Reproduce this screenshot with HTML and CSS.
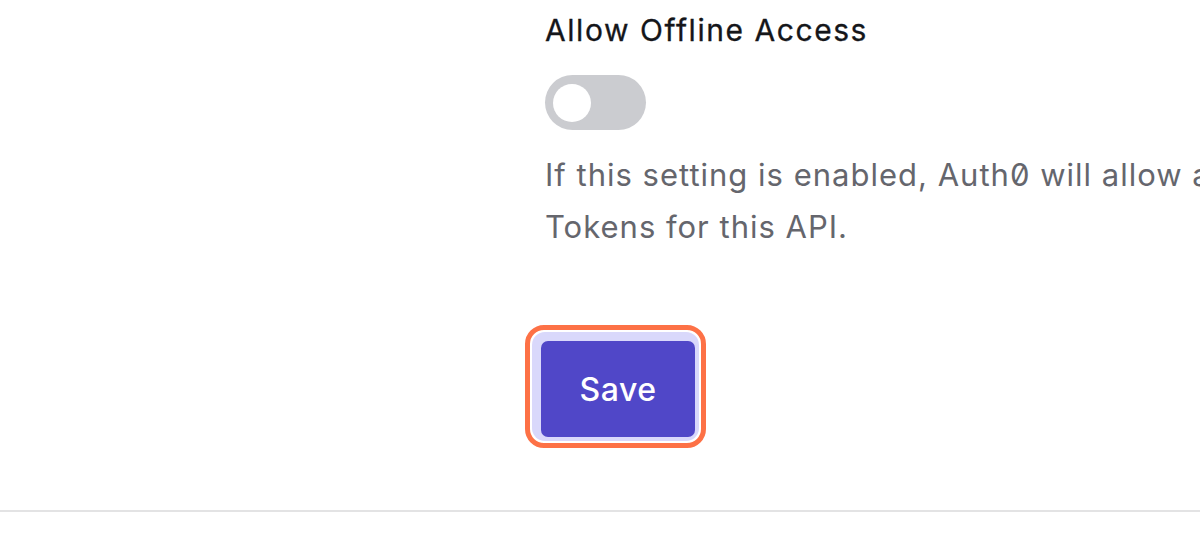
FILE: index.html
```html
<!DOCTYPE html>
<html lang="en">
<head>
<meta charset="utf-8">
<title>API Settings</title>
<link rel="stylesheet" href="styles.css">
</head>
<body>
<main class="page">
  <section class="content">
    <div class="field">
      <h3 class="field-label">Allow Offline Access</h3>
      <div class="toggle" role="switch" aria-checked="false"><span class="knob"></span></div>
      <p class="field-help">If this setting is enabled, Auth<span class="zero">0</span> will allow applications to ask for Refresh<br>Tokens for this API.</p>
    </div>
    <div class="actions">
      <div class="highlight">
        <div class="focus-ring">
          <button class="btn-primary" type="button">Save</button>
        </div>
      </div>
    </div>
  </section>
  <hr class="divider">
</main>
</body>
</html>
```

FILE: styles.css
```css
html, body {
  margin: 0;
  padding: 0;
  background: #ffffff;
}
body {
  width: 1200px;
  height: 548px;
  overflow: hidden;
  font-family: Inter, "Noto Sans", "Liberation Sans", sans-serif;
}
.page {
  display: flex;
  flex-direction: column;
  width: 1200px;
  overflow: hidden;
}
.content {
  margin-left: 545px;
  width: 655px;
  padding-top: 10px;
}
.field {
  display: flex;
  flex-direction: column;
  align-items: flex-start;
}
.field-label {
  margin: 0;
  font-size: 30px;
  line-height: 40px;
  font-weight: 400;
  color: #15161a;
  letter-spacing: 1.55px;
  -webkit-text-stroke: 0.3px #15161a;
}
.toggle {
  margin-top: 25px;
  width: 101px;
  height: 55px;
  border-radius: 28px;
  background: #cbccd0;
  display: flex;
  align-items: center;
  padding-left: 8px;
  box-sizing: border-box;
}
.knob {
  width: 38px;
  height: 38px;
  border-radius: 50%;
  background: #ffffff;
}
.field-help {
  margin: 19px 0 0;
  font-size: 31px;
  line-height: 52px;
  color: #65666d;
  font-weight: 400;
  letter-spacing: 1px;
  white-space: nowrap;
}
.zero {
  font-feature-settings: "zero" 1;
}
.actions {
  margin-top: 72px;
  margin-left: -20px;
  display: flex;
}
.highlight {
  border: 5px solid #fd7146;
  border-radius: 19px;
  padding: 2px;
  background: #ffffff;
}
.focus-ring {
  background: #d9d8fb;
  border-radius: 13px;
  padding: 9px 4px 4px 9px;
  display: flex;
}
.btn-primary {
  width: 154px;
  height: 96px;
  border: none;
  border-radius: 7px;
  background: #5047c8;
  color: #ffffff;
  font-family: Inter, "Noto Sans", "Liberation Sans", sans-serif;
  font-size: 32px;
  font-weight: 500;
  letter-spacing: 0.5px;
  padding: 0;
}
.divider {
  margin: 62px 0 0;
  border: none;
  height: 2px;
  background: #e3e3e4;
  width: 1200px;
}
```
